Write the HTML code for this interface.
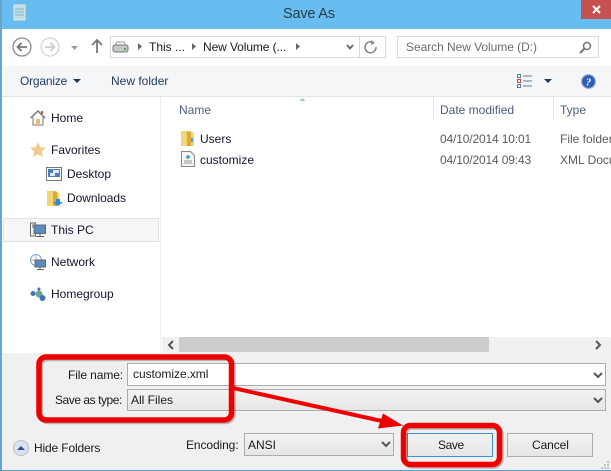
<!DOCTYPE html>
<html><head><meta charset="utf-8">
<style>
html,body{margin:0;padding:0;background:#fff}
#w{position:relative;width:611px;height:471px;overflow:hidden;background:#fff;font-family:"Liberation Sans",sans-serif;font-size:12px;color:#1a1a1a}
.t{position:absolute;white-space:nowrap;line-height:14px}
.b{position:absolute;box-sizing:border-box}
svg{position:absolute;overflow:visible}
.n{color:#1b1030}
.h{color:#4c607a}
.g{background:linear-gradient(#f2f2f2,#e6e6e6)}
</style></head><body><div id="w">
<div class="b" style="left:0;top:0;width:611px;height:29px;background:#67bdf0"></div>
<div class="b" style="left:0;top:0;width:2px;height:471px;background:#67a6cc"></div>
<div class="b" style="left:0;top:470px;width:611px;height:1px;background:#5a9fc8"></div>
<div class="b" style="left:581px;top:0;width:30px;height:19px;background:#c75050"></div>
<svg style="left:0;top:0" width="611" height="30"><path d="M593 6l7 7M600 6l-7 7" stroke="#fff" stroke-width="2"/>
<path d="M14 5h11v15h-11z" fill="#bfe0ea" stroke="#e8e4cf"/><path d="M15 9h9M15 12h9M15 15h9" stroke="#7fb2c4"/></svg>
<div class="t" style="left:283px;top:5px;font-size:14.500px;line-height:18px;letter-spacing:-.2px;color:#2b3b47">Save As</div>

<svg style="left:0;top:30px" width="140" height="30" fill="none">
<circle cx="22" cy="17" r="9" stroke="#8a8a8a" stroke-width="1.3"/><path d="M27 17h-9M21.500 13l-4 4 4 4" stroke="#777" stroke-width="1.800"/>
<circle cx="50" cy="17" r="9" stroke="#d4d4d4" stroke-width="1.300"/><path d="M45 17h9M50.500 13l4 4-4 4" stroke="#ccc" stroke-width="1.800"/>
<path d="M71 16h7l-3.500 4z" fill="#999"/>
<path d="M97 23v-13M92 15l5-5 5 5" stroke="#777" stroke-width="1.800"/>
</svg>
<div class="b" style="left:110px;top:36px;width:276px;height:22px;border:1px solid #d9d9d9;background:#fff"></div>
<div class="b" style="left:359px;top:36px;width:1px;height:22px;background:#d9d9d9"></div>
<svg style="left:110px;top:36px" width="276" height="22" fill="none">
<rect x="3" y="9" width="15" height="7" rx="2" fill="#c8c8c8" stroke="#777"/><path d="M5 9l2-3h7l2 3" stroke="#999"/><rect x="14" y="12" width="2" height="2" fill="#4a4"/>
<path d="M28 7v7l4-3.500z" fill="#666"/><path d="M82 7v7l4-3.500z" fill="#666"/><path d="M186 7v7l4-3.500z" fill="#666"/>
<path d="M237 9l3 3.500 3-3.500" stroke="#666" stroke-width="1.800"/>
<path d="M264 7a5.500 5.500 0 1 0 2 4" stroke="#888" stroke-width="1.600"/><path d="M261 4l4 3-4 2z" fill="#888"/>
</svg>
<div class="t" style="left:149px;top:40px">This ...</div>
<div class="t" style="left:203px;top:40px;letter-spacing:-.1px">New Volume (...</div>
<div class="b" style="left:397px;top:36px;width:202px;height:22px;border:1px solid #d9d9d9;background:#fff"></div>
<div class="t" style="left:406px;top:40px;color:#6d6d6d;letter-spacing:-.05px">Search New Volume (D:)</div>
<svg style="left:578px;top:40px" width="16" height="16" fill="none"><circle cx="9" cy="6" r="3.500" stroke="#777" stroke-width="1.500"/><path d="M6.500 8.500L2 13" stroke="#777" stroke-width="2"/></svg>

<div class="b" style="left:2px;top:66px;width:609px;height:31px;background:#f5f6f7;border-bottom:1px solid #e4e5e6"></div>
<div class="t" style="left:20px;top:74px;color:#1e3a5f;letter-spacing:-.2px">Organize</div>
<svg style="left:72px;top:78px" width="10" height="6"><path d="M1 1h8l-4 4z" fill="#1e3a5f"/></svg>
<div class="t" style="left:111px;top:74px;color:#1e3a5f">New folder</div>
<svg style="left:517px;top:74px" width="20" height="14" fill="none"><rect x=".5" y=".5" width="3" height="3" stroke="#5a7a9a"/><rect x=".5" y="5.500" width="3" height="3" stroke="#b05050"/><rect x=".5" y="10.500" width="3" height="3" stroke="#5a7a9a"/><path d="M6 2h9M6 7h9M6 12h9" stroke="#5a7a9a"/></svg>
<svg style="left:543px;top:78px" width="10" height="6"><path d="M1 1h8l-4 4z" fill="#1e3a5f"/></svg>
<svg style="left:581px;top:74px" width="15" height="15"><circle cx="7.500" cy="7.500" r="6.800" fill="#2a5cc0" stroke="#9aa5b5" stroke-width="1.200"/><text x="7.500" y="11.500" text-anchor="middle" font-family="Liberation Serif" font-style="italic" font-weight="bold" font-size="11" fill="#fff">?</text></svg>

<div class="b" style="left:160px;top:97px;width:1px;height:256px;background:#f0f0f0"></div>
<div class="b" style="left:433px;top:97px;width:1px;height:22px;background:#e4e8ee"></div>
<div class="b" style="left:553px;top:97px;width:1px;height:22px;background:#e4e8ee"></div>
<svg style="left:299px;top:97px" width="8" height="5"><path d="M0.500 4l3-3 3 3z" fill="#9cc4e0"/></svg>
<div class="t h" style="left:179px;top:103px">Name</div>
<div class="t h" style="left:440px;top:103px">Date modified</div>
<div class="t h" style="left:560px;top:103px">Type</div>

<svg style="left:181px;top:130px" width="14" height="16"><path d="M0 1h9l4 2v13H0z" fill="#f2d675"/><path d="M6 1l4 1v14H6z" fill="#d9a93a"/><rect x="10" y="8" width="2" height="4" fill="#4aa0d8"/></svg>
<div class="t n" style="left:200px;top:132px">Users</div>
<div class="t" style="left:440px;top:132px;color:#5a5a5a;letter-spacing:-.15px">04/10/2014 10:01</div>
<div class="t" style="left:560px;top:132px;color:#5a5a5a">File folder</div>
<svg style="left:181px;top:151px" width="14" height="16" fill="none"><path d="M.5.500h9l4 4v11H.500z" fill="#f4f4f4" stroke="#8a8a8a"/><path d="M3 10h8M3 12h8" stroke="#999"/><circle cx="7" cy="6" r="1.800" fill="#2a9ab0"/></svg>
<div class="t n" style="left:200px;top:153px">customize</div>
<div class="t" style="left:440px;top:153px;color:#5a5a5a;letter-spacing:-.15px">04/10/2014 09:43</div>
<div class="t" style="left:560px;top:153px;color:#5a5a5a">XML Docu</div>

<svg style="left:30px;top:110px" width="16" height="16"><path d="M.5 8L8 1l7 7" fill="none" stroke="#777" stroke-width="1.500"/><path d="M3 7v8h10V7" fill="#fff" stroke="#777"/><rect x="6" y="9" width="4" height="6" fill="#f0b878"/><rect x="11" y="1" width="2" height="3" fill="#d8562a"/></svg>
<div class="t n" style="left:51px;top:111px">Home</div>
<svg style="left:30px;top:142px" width="16" height="15"><path d="M8 0l2.300 5.200 5.700.6-4.300 3.700 1.300 5.500L8 12.100 3 15l1.300-5.500L0 5.800l5.700-.6z" fill="#f3c88f"/></svg>
<div class="t n" style="left:51px;top:143px">Favorites</div>
<svg style="left:46px;top:167px" width="16" height="14"><rect x=".5" y=".5" width="15" height="13" fill="#fff" stroke="#777"/><rect x="2" y="2" width="12" height="8" fill="#4a82bc"/><rect x="7" y="3" width="6" height="3" fill="#dfe8f2"/><rect x="4" y="6" width="5" height="3" fill="#dfe8f2"/></svg>
<div class="t n" style="left:67px;top:167px">Desktop</div>
<svg style="left:47px;top:190px" width="16" height="16"><path d="M0 1h9l3 2v13H0z" fill="#f2d675"/><path d="M6 1l4 1v14H6z" fill="#d9a93a"/><path d="M9 9h4v3h3l-5 4-5-4h3z" fill="#2a8ae0"/></svg>
<div class="t n" style="left:67px;top:191px;letter-spacing:-.05px">Downloads</div>
<div class="b" style="left:3px;top:218px;width:156px;height:24px;background:#f6f6f6;border:1px solid #e2e2e2"></div>
<svg style="left:30px;top:222px" width="16" height="16" fill="none"><path d="M.5 1h5v13h-5z" stroke="#666"/><path d="M2 3h2M2 5h2" stroke="#666"/><rect x="4" y="3" width="11.500" height="8.500" fill="#5a8cc4" stroke="#666"/><path d="M10 12v2M6 14.500h8" stroke="#666"/></svg>
<div class="t n" style="left:51px;top:223px">This PC</div>
<svg style="left:30px;top:254px" width="16" height="16" fill="none"><circle cx="6" cy="6" r="5.500" stroke="#7d9fc0"/><path d="M.5 6h11M6 .5v11" stroke="#7d9fc0" stroke-width=".7"/><rect x="5" y="6" width="10.500" height="7" fill="#5a8cc4" stroke="#666"/><path d="M10 13.500v1.500M7 15.500h7" stroke="#666"/></svg>
<div class="t n" style="left:51px;top:255px">Network</div>
<svg style="left:30px;top:287px" width="16" height="15"><circle cx="3" cy="6.500" r="2.500" fill="#3f74b8"/><circle cx="9" cy="2" r="1.500" fill="#3f74b8"/><circle cx="9" cy="7" r="3.500" fill="#6fa38c"/><circle cx="12.500" cy="11" r="3" fill="#3f74b8"/></svg>
<div class="t n" style="left:51px;top:287px">Homegroup</div>

<div class="b" style="left:162px;top:337px;width:449px;height:16px;background:#f0f0f0"></div>
<div class="b" style="left:179px;top:337px;width:310px;height:15px;background:#cdcdcd"></div>
<svg style="left:165px;top:340px" width="446" height="10" fill="none"><path d="M8 1L4 5l4 4" stroke="#555" stroke-width="2"/><path d="M431 1l4 4-4 4" stroke="#555" stroke-width="2"/></svg>

<div class="b" style="left:2px;top:353px;width:609px;height:117px;background:#f0f0f0"></div>
<div class="t n" style="left:68px;top:368px;color:#1a1a1a;letter-spacing:-.1px">File name:</div>
<div class="b" style="left:127px;top:363px;width:479px;height:23px;background:#fff;border:1px solid #acacac"></div>
<div class="t" style="left:133px;top:367px;letter-spacing:-.05px">customize.xml</div>
<div class="t" style="left:55px;top:393px;letter-spacing:-.45px">Save as type:</div>
<div class="b g" style="left:127px;top:389px;width:479px;height:22px;border:1px solid #acacac"></div>
<div class="t" style="left:131px;top:393px">All Files</div>
<svg style="left:593px;top:371px" width="12" height="34" fill="none"><path d="M1 2l4 4 4-4" stroke="#555" stroke-width="2"/><path d="M1 27l4 4 4-4" stroke="#555" stroke-width="2"/></svg>

<svg style="left:13px;top:440px" width="16" height="16"><circle cx="8" cy="8" r="7.500" fill="#dbe3ee" stroke="#b5c0d0"/><path d="M4 10l4-4 4 4z" fill="#2a4f8f"/></svg>
<div class="t" style="left:34px;top:441px;letter-spacing:-.15px">Hide Folders</div>
<div class="t" style="left:186px;top:438px;letter-spacing:-.1px">Encoding:</div>
<div class="b g" style="left:244px;top:433px;width:150px;height:23px;border:1px solid #acacac"></div>
<div class="t" style="left:248px;top:438px">ANSI</div>
<svg style="left:381px;top:441px" width="10" height="8" fill="none"><path d="M1 1l4 4 4-4" stroke="#555" stroke-width="2"/></svg>
<div class="b g" style="left:407px;top:433px;width:86px;height:24px;border:1px solid #3c8fdc"></div>
<div class="t" style="left:438px;top:438px;letter-spacing:-.4px">Save</div>
<div class="b g" style="left:507px;top:433px;width:86px;height:24px;border:1px solid #acacac"></div>
<div class="t" style="left:532px;top:438px;letter-spacing:-.1px">Cancel</div>
<svg style="left:600px;top:460px" width="10" height="9"><path d="M7 1h2v2H7zM4 4h2v2H4zM7 4h2v2H7zM1 7h2v2H1zM4 7h2v2H4zM7 7h2v2H7z" fill="#c4c4c4"/></svg>

<svg style="left:0;top:0" width="611" height="471" fill="none">
<g opacity=".3" stroke="#333" transform="translate(1.500 1.500)"><rect x="39" y="357" width="192.500" height="63" rx="7" stroke-width="5.500"/><rect x="403.500" y="425.500" width="96" height="39" rx="7" stroke-width="5.500"/></g>
<path d="M233 388L382 421" stroke="#ee0000" stroke-width="4"/>
<path d="M378 428.500L383 413.500L403 425.500Z" fill="#ee0000"/>
<rect x="39" y="357" width="192.500" height="63" rx="7" stroke="#ee0000" stroke-width="5.500"/>
<rect x="403.500" y="425.500" width="96" height="39" rx="7" stroke="#ee0000" stroke-width="5.500"/>
</svg>
</div></body></html>
